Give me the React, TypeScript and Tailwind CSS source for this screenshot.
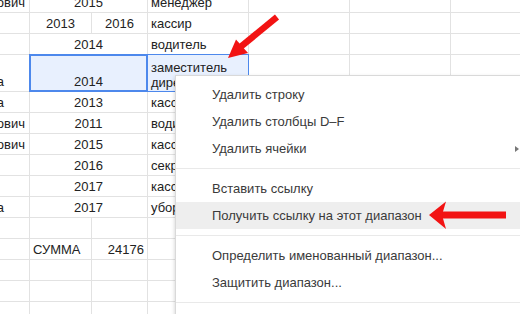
import React from "react";

type Cell = {
  w: string;
  text?: string;
  align?: string;
  sel?: boolean;
  wrap?: boolean;
};

type Row = {
  h: string;
  cells: Cell[];
};

const cellBase =
  "shrink-0 border-r border-b border-[#e2e2e2] flex items-end overflow-hidden leading-[16px] pb-[1px]";

// column A is cut off on the left, only the tail of the name shows
const colA = (text?: string, pad = "pr-[4px]"): Cell => ({
  w: "w-[30px]",
  text,
  align: `justify-end ${pad}`,
});

const merged = (text?: string, sel = false): Cell => ({
  w: "w-[118px]",
  text,
  align: "justify-center px-[3px]",
  sel,
});

const colD = (text?: string, sel = false, wrap = false): Cell => ({
  w: "w-[101px]",
  text,
  align: "justify-start px-[3px]",
  sel,
  wrap,
});

const empty = (w: string): Cell => ({ w });

const rest = [empty("w-[101px]"), empty("w-[101px]"), empty("w-[101px]")];

const rows: Row[] = [
  { h: "h-[13px]", cells: [colA("ович"), merged("2015"), colD("менеджер"), ...rest] },
  {
    h: "h-[21px]",
    cells: [
      colA(),
      { w: "w-[62px]", text: "2013", align: "justify-center" },
      { w: "w-[56px]", text: "2016", align: "justify-center" },
      colD("кассир"),
      ...rest,
    ],
  },
  { h: "h-[21px]", cells: [colA(), merged("2014"), colD("водитель"), ...rest] },
  {
    h: "h-[37px]",
    cells: [colA("а", "pr-[25px]"), merged("2014", true), colD("заместитель директора", true, true), ...rest],
  },
  { h: "h-[21px]", cells: [colA("а", "pr-[25px]"), merged("2013"), colD("кассир"), ...rest] },
  { h: "h-[21px]", cells: [colA("ович"), merged("2011"), colD("водитель"), ...rest] },
  { h: "h-[21px]", cells: [colA("ович"), merged("2015"), colD("кассир"), ...rest] },
  { h: "h-[21px]", cells: [colA(), merged("2016"), colD("секретарь"), ...rest] },
  { h: "h-[21px]", cells: [colA(), merged("2017"), colD("кассир"), ...rest] },
  { h: "h-[21px]", cells: [colA("а", "pr-[25px]"), merged("2017"), colD("уборщица"), ...rest] },
  { h: "h-[21px]", cells: [colA(), empty("w-[62px]"), empty("w-[56px]"), colD(), ...rest] },
  {
    h: "h-[21px]",
    cells: [
      colA(),
      { w: "w-[62px]", text: "СУММА", align: "justify-start px-[3px]" },
      { w: "w-[56px]", text: "24176", align: "justify-end pr-[3px]" },
      colD(),
      ...rest,
    ],
  },
  { h: "h-[21px]", cells: [colA(), empty("w-[62px]"), empty("w-[56px]"), colD(), ...rest] },
  { h: "h-[21px]", cells: [colA(), empty("w-[62px]"), empty("w-[56px]"), colD(), ...rest] },
  { h: "h-[21px]", cells: [colA(), empty("w-[62px]"), empty("w-[56px]"), colD(), ...rest] },
];

const menuItems: (string | null)[] = [
  "Удалить строку",
  "Удалить столбцы D–F",
  "Удалить ячейки",
  null,
  "Вставить ссылку",
  "Получить ссылку на этот диапазон",
  null,
  "Определить именованный диапазон...",
  "Защитить диапазон...",
  null,
];

const App = () => {
  return (
    <div
      className="relative w-[520px] h-[314px] overflow-hidden bg-white text-[13px] text-[#222]"
      style={{ fontFamily: '"Liberation Sans", Arial, sans-serif' }}
    >
      {/* Grid */}
      <div className="flex flex-col">
        {rows.map((row, i) => (
          <div key={i} className={`relative flex ${row.h}`}>
            {row.cells.map((c, j) => (
              <div
                key={j}
                className={`${cellBase} ${c.w} ${c.align ?? ""} ${c.sel ? "bg-[#e8f0fe]" : ""} ${
                  c.wrap ? "whitespace-normal" : "whitespace-nowrap"
                }`}
              >
                {c.text && <span className={c.wrap ? "block leading-[15px]" : ""}>{c.text}</span>}
              </div>
            ))}
            {i === 3 && (
              <>
                {/* selected range B:D */}
                <div className="absolute left-[29px] top-[-1px] w-[220px] h-[38px] border border-[#4d88ec]" />
                {/* active cell */}
                <div className="absolute left-[29px] top-[-1px] w-[119px] h-[38px] border-2 border-[#4d88ec]" />
              </>
            )}
          </div>
        ))}
      </div>

      {/* Context menu */}
      <div className="absolute left-[175px] top-[75px] w-[380px] h-[260px] bg-white border border-[rgba(0,0,0,0.15)] shadow-[0_2px_4px_rgba(0,0,0,0.2)] pt-[5px] text-[#3a3a3a]">
        {menuItems.map((item, i) =>
          item === null ? (
            <div key={i} className="my-[6px] h-px bg-[#e9e9e9]" />
          ) : (
            <div
              key={i}
              className={`flex items-center h-[27px] pl-[36px] whitespace-nowrap ${
                i === 5 ? "bg-[#eeeeee]" : ""
              }`}
            >
              <span>{item}</span>
              {i === 2 && (
                <span className="ml-auto mr-[35px] w-0 h-0 border-y-[3.5px] border-y-transparent border-l-[4px] border-l-[#777]" />
              )}
            </div>
          )
        )}
      </div>

      {/* Red arrows */}
      <svg className="absolute inset-0 pointer-events-none" width="520" height="314" viewBox="0 0 520 314">
        <line x1="277" y1="17" x2="238" y2="49" stroke="#f21313" strokeWidth="6.5" />
        <polygon points="228,58 236,39.5 248,53" fill="#f21313" />
        <rect x="441" y="211.5" width="65" height="7" fill="#f21313" />
        <polygon points="429,215 446,201.5 442,215 446,229" fill="#f21313" />
      </svg>
    </div>
  );
};

export default App;
